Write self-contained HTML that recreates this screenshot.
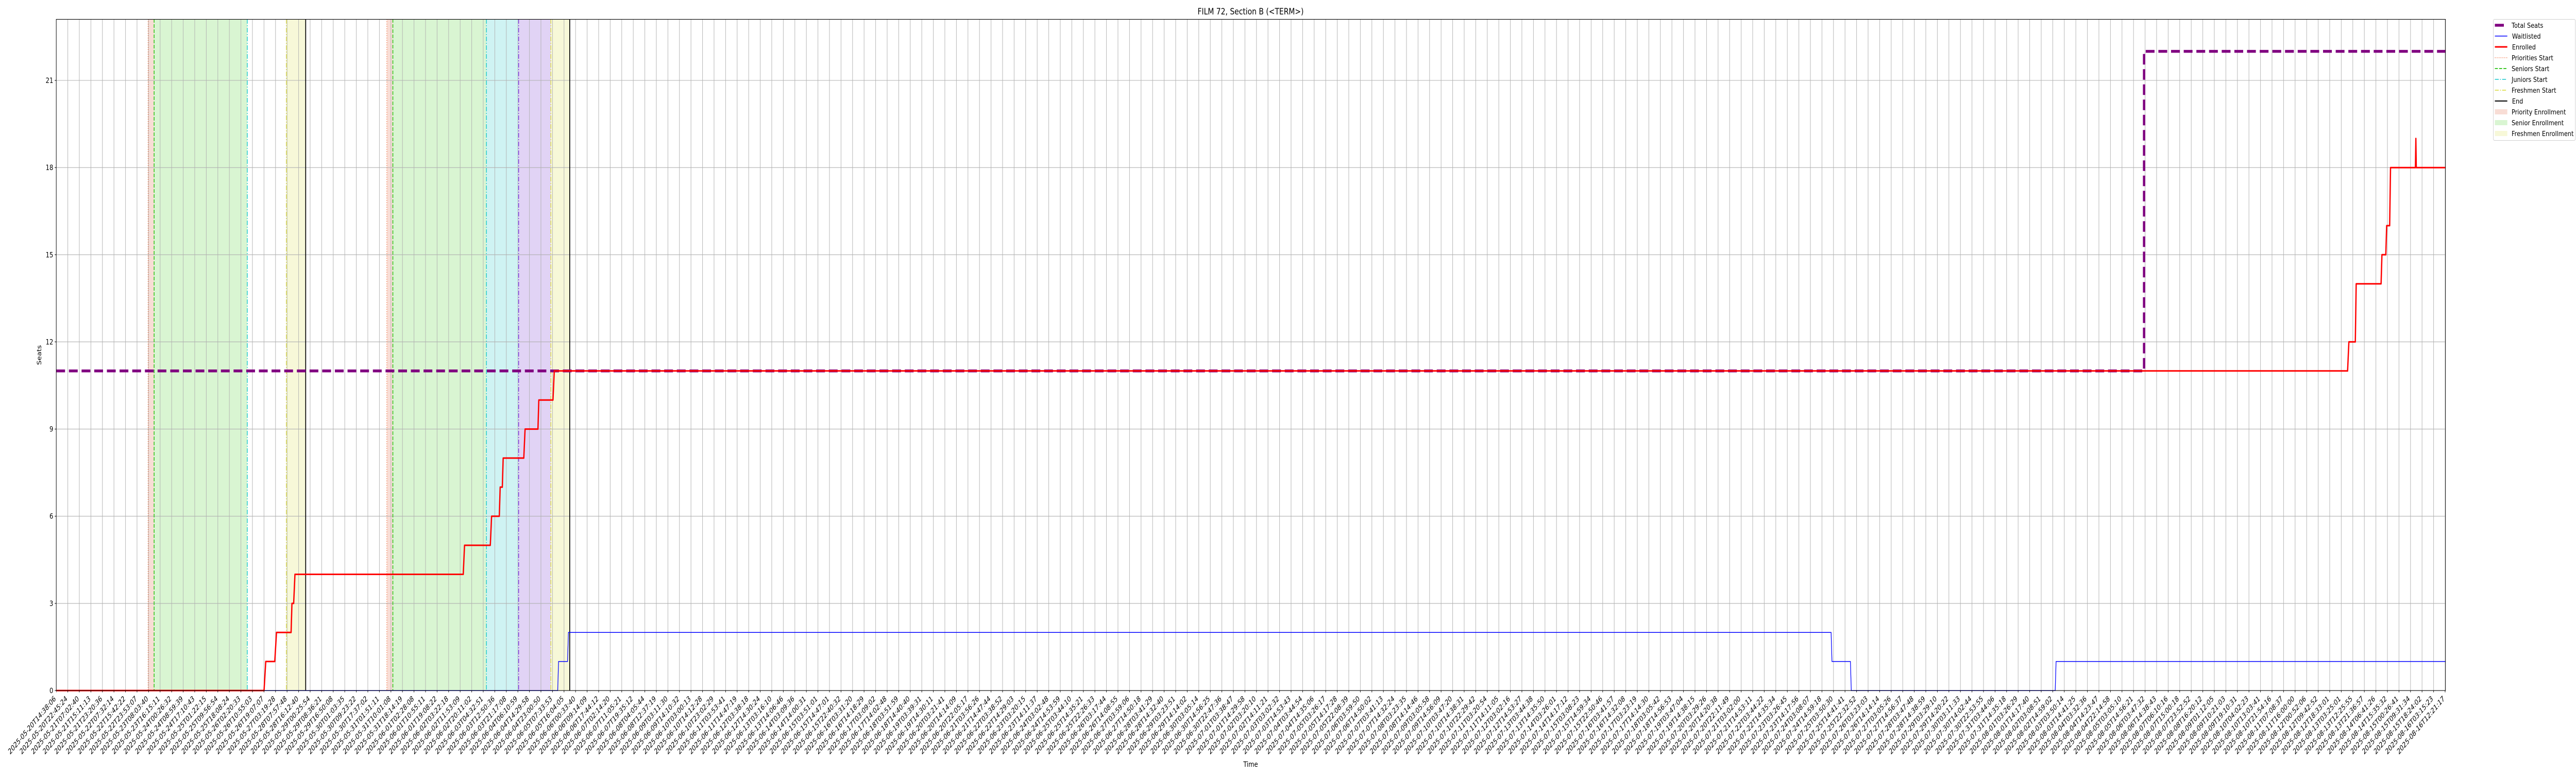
<!DOCTYPE html>
<html><head><meta charset="utf-8"><style>
html,body{margin:0;padding:0;background:#fff;width:5000px;height:1500px;overflow:hidden;}
#w{position:absolute;left:0;top:0;width:6000px;height:1500px;overflow:hidden;font-family:"DejaVu Sans","Liberation Sans",sans-serif;transform-origin:0 0;transform:scaleX(0.833333);}
svg{position:absolute;left:0;top:0;}
#l{position:absolute;left:117.56px;top:0;width:5592px;height:1500px;display:flex;}
#l i{display:block;position:relative;width:26.88px;height:10px;flex:none;}
#l b{position:absolute;right:20.4px;top:1349px;white-space:nowrap;font-weight:normal;font-size:13.9px;line-height:14px;color:#000;transform-origin:100% 0;transform:rotate(-45deg);}
</style></head><body><div id="w">
<svg width="6000" height="1500" viewBox="0 0 6000 1500" font-family="DejaVu Sans, Liberation Sans, sans-serif">
<defs>
<pattern id="vg" x="130.45" y="0" width="26.88" height="1500" patternUnits="userSpaceOnUse"><rect x="0" y="0" width="1.1" height="1500" fill="#b0b0b0"/></pattern>
<pattern id="tk" x="130.45" y="0" width="26.88" height="1500" patternUnits="userSpaceOnUse"><rect x="0" y="0" width="1.1" height="1500" fill="#000"/></pattern>
</defs>
<g>
<rect x="345" y="37" width="14" height="1303" fill="#f8ddd5"/>
<rect x="359" y="37" width="217" height="1303" fill="#d9f5d2"/>
<rect x="667" y="37" width="45" height="1303" fill="#f7f8d8"/>
<rect x="901" y="37" width="14" height="1303" fill="#f8ddd5"/>
<rect x="915" y="37" width="218" height="1303" fill="#d9f5d2"/>
<rect x="1133" y="37" width="75" height="1303" fill="#cff3f3"/>
<rect x="1208" y="37" width="75" height="1303" fill="#e1d3f5"/>
<rect x="1283" y="37" width="44" height="1303" fill="#f7f8d8"/>
</g>
<rect x="131" y="37" width="5565" height="1303" fill="url(#vg)"/>
<g stroke="#b0b0b0" stroke-width="1.1">
<line x1="131" x2="5696" y1="1170.9" y2="1170.9"/>
<line x1="131" x2="5696" y1="1001.7" y2="1001.7"/>
<line x1="131" x2="5696" y1="832.6" y2="832.6"/>
<line x1="131" x2="5696" y1="663.4" y2="663.4"/>
<line x1="131" x2="5696" y1="494.3" y2="494.3"/>
<line x1="131" x2="5696" y1="325.2" y2="325.2"/>
<line x1="131" x2="5696" y1="156" y2="156"/>
</g>
<g fill="none">
<g stroke="#f26a3a" stroke-width="1.5" stroke-dasharray="1.5,3"><line x1="345" x2="345" y1="37" y2="1340"/><line x1="901" x2="901" y1="37" y2="1340"/></g>
<g stroke="#3fc92a" stroke-width="2" stroke-dasharray="7,3"><line x1="359" x2="359" y1="37" y2="1340"/><line x1="915" x2="915" y1="37" y2="1340"/></g>
<g stroke="#12c6cc" stroke-width="1.6" stroke-dasharray="9,3,2,3"><line x1="576" x2="576" y1="37" y2="1340"/><line x1="1133" x2="1133" y1="37" y2="1340"/></g>
<g stroke="#7a35e0" stroke-width="1.6" stroke-dasharray="9,3,2,3"><line x1="1208" x2="1208" y1="37" y2="1340"/></g>
<g stroke="#d9d935" stroke-width="1.5" stroke-dasharray="9,3,2,3"><line x1="667" x2="667" y1="37" y2="1340"/><line x1="1283" x2="1283" y1="37" y2="1340"/></g>
<g stroke="#000" stroke-width="2"><line x1="712" x2="712" y1="37" y2="1340"/><line x1="1327" x2="1327" y1="37" y2="1340"/></g>
</g>
<polyline fill="none" stroke="#800080" stroke-width="5.5" stroke-dasharray="20.5,9" points="131,719.8 4994,719.8 4994,99.6 5696,99.6"/>
<polyline fill="none" stroke="#0000ff" stroke-width="1.5" points="131,1340 1299,1340 1301,1283.6 1322,1283.6 1324,1227.2 4265,1227.2 4267,1283.6 4310,1283.6 4312,1340 4787,1340 4789,1283.6 5696,1283.6"/>
<polyline fill="none" stroke="#ff0000" stroke-width="3" stroke-linejoin="round" points="131,1340 615,1340 619,1283.6 640,1283.6 644,1227.2 678,1227.2 680,1170.9 684,1170.9 687,1114.5 1079,1114.5 1082,1058.1 1142,1058.1 1145,1001.7 1163,1001.7 1165,945.3 1170,945.3 1172,888.9 1220,888.9 1223,832.6 1253,832.6 1255,776.2 1288,776.2 1291,719.8 5468,719.8 5471,663.4 5486,663.4 5488,550.7 5546,550.7 5548,494.3 5557,494.3 5559,437.9 5566,437.9 5568,325.2 5626,325.2 5627,268.8 5628,325.2 5696,325.2"/>
<rect x="131" y="37.5" width="5565" height="1302.5" fill="none" stroke="#000" stroke-width="1.1"/>
<rect x="131" y="1340" width="5566" height="3.5" fill="url(#tk)"/>
<g stroke="#000" stroke-width="1.1">
<line x1="127.5" x2="131" y1="1340" y2="1340"/><line x1="127.5" x2="131" y1="1170.9" y2="1170.9"/><line x1="127.5" x2="131" y1="1001.7" y2="1001.7"/><line x1="127.5" x2="131" y1="832.6" y2="832.6"/><line x1="127.5" x2="131" y1="663.4" y2="663.4"/><line x1="127.5" x2="131" y1="494.3" y2="494.3"/><line x1="127.5" x2="131" y1="325.2" y2="325.2"/><line x1="127.5" x2="131" y1="156" y2="156"/>
</g>
<g font-size="13.9" text-anchor="end" fill="#000">
<text x="124" y="1345">0</text><text x="124" y="1175.9">3</text><text x="124" y="1006.7">6</text><text x="124" y="837.6">9</text><text x="124" y="668.4">12</text><text x="124" y="499.3">15</text><text x="124" y="330.2">18</text><text x="124" y="161">21</text>
</g>
<text x="2913" y="28" font-size="16.7" text-anchor="middle">FILM 72, Section B (&lt;TERM&gt;)</text>
<text transform="translate(96,689) rotate(-90)" font-size="13.9" text-anchor="middle">Seats</text>
<text x="2913" y="1488" font-size="13.9" text-anchor="middle">Time</text>
<rect x="5807.5" y="37.5" width="191" height="235" rx="3" fill="#fff" stroke="#d0d0d0" stroke-width="1.1"/>
<g fill="none">
<line x1="5811" x2="5832" y1="49" y2="49" stroke="#800080" stroke-width="5.5"/>
<line x1="5811" x2="5840" y1="70" y2="70" stroke="#0000ff" stroke-width="1.5"/>
<line x1="5811" x2="5840" y1="91" y2="91" stroke="#ff0000" stroke-width="3"/>
<line x1="5811" x2="5840" y1="112" y2="112" stroke="#f26a3a" stroke-width="1.5" stroke-dasharray="1.5,3"/>
<line x1="5811" x2="5840" y1="133" y2="133" stroke="#3fc92a" stroke-width="2" stroke-dasharray="7,3"/>
<line x1="5811" x2="5840" y1="154" y2="154" stroke="#12c6cc" stroke-width="1.6" stroke-dasharray="9,3,2,3"/>
<line x1="5811" x2="5840" y1="175" y2="175" stroke="#d9d935" stroke-width="1.5" stroke-dasharray="9,3,2,3"/>
<line x1="5811" x2="5840" y1="196" y2="196" stroke="#000" stroke-width="2"/>
</g>
<rect x="5811" y="212" width="29" height="10" fill="#f8ddd5"/>
<rect x="5811" y="233" width="29" height="10" fill="#d9f5d2"/>
<rect x="5811" y="254" width="29" height="10" fill="#f7f8d8"/>
<g font-size="13.6" fill="#000">
<text x="5850" y="54">Total Seats</text>
<text x="5851" y="75">Waitlisted</text>
<text x="5851" y="96">Enrolled</text>
<text x="5850" y="117">Priorities Start</text>
<text x="5850" y="138">Seniors Start</text>
<text x="5850" y="159">Juniors Start</text>
<text x="5850" y="180">Freshmen Start</text>
<text x="5851" y="201">End</text>
<text x="5850" y="222">Priority Enrollment</text>
<text x="5850" y="243">Senior Enrollment</text>
<text x="5850" y="264">Freshmen Enrollment</text>
</g>
</svg>
<div id="l">
<i><b>2025-05-20T14:38:06</b></i><i><b>2025-05-20T22:45:24</b></i><i><b>2025-05-21T07:02:40</b></i><i><b>2025-05-21T15:11:13</b></i><i><b>2025-05-21T23:20:36</b></i><i><b>2025-05-22T07:32:14</b></i><i><b>2025-05-22T15:42:22</b></i><i><b>2025-05-22T23:53:07</b></i><i><b>2025-05-23T08:03:40</b></i><i><b>2025-05-23T16:15:11</b></i>
<i><b>2025-05-24T00:26:32</b></i><i><b>2025-05-24T08:59:39</b></i><i><b>2025-05-24T17:10:43</b></i><i><b>2025-05-25T01:22:15</b></i><i><b>2025-05-25T09:56:54</b></i><i><b>2025-05-25T18:08:24</b></i><i><b>2025-05-26T02:20:33</b></i><i><b>2025-05-26T10:55:03</b></i><i><b>2025-05-26T19:07:07</b></i><i><b>2025-05-27T03:19:28</b></i>
<i><b>2025-05-28T07:57:48</b></i><i><b>2025-05-28T16:12:40</b></i><i><b>2025-05-29T00:25:54</b></i><i><b>2025-05-29T08:36:21</b></i><i><b>2025-05-29T16:50:08</b></i><i><b>2025-05-30T01:03:35</b></i><i><b>2025-05-30T09:23:22</b></i><i><b>2025-05-30T17:37:02</b></i><i><b>2025-05-31T01:51:11</b></i><i><b>2025-05-31T10:01:08</b></i>
<i><b>2025-05-31T18:14:19</b></i><i><b>2025-06-01T02:28:08</b></i><i><b>2025-06-01T10:55:11</b></i><i><b>2025-06-01T19:08:22</b></i><i><b>2025-06-02T03:22:18</b></i><i><b>2025-06-02T11:53:09</b></i><i><b>2025-06-02T20:11:02</b></i><i><b>2025-06-03T04:32:51</b></i><i><b>2025-06-03T12:50:36</b></i><i><b>2025-06-03T21:17:08</b></i>
<i><b>2025-06-04T06:10:59</b></i><i><b>2025-06-04T14:29:58</b></i><i><b>2025-06-04T23:00:50</b></i><i><b>2025-06-05T07:33:53</b></i><i><b>2025-06-05T16:04:05</b></i><i><b>2025-06-06T00:33:40</b></i><i><b>2025-06-06T09:14:09</b></i><i><b>2025-06-06T17:44:12</b></i><i><b>2025-06-07T02:14:20</b></i><i><b>2025-06-07T11:05:21</b></i>
<i><b>2025-06-07T19:35:12</b></i><i><b>2025-06-08T04:05:44</b></i><i><b>2025-06-08T12:37:19</b></i><i><b>2025-06-09T03:11:30</b></i><i><b>2025-06-09T14:10:32</b></i><i><b>2025-06-10T03:00:13</b></i><i><b>2025-06-10T14:12:28</b></i><i><b>2025-06-10T23:02:29</b></i><i><b>2025-06-11T03:53:41</b></i><i><b>2025-06-11T14:47:19</b></i>
<i><b>2025-06-12T03:38:18</b></i><i><b>2025-06-12T14:30:24</b></i><i><b>2025-06-13T03:16:10</b></i><i><b>2025-06-13T14:06:46</b></i><i><b>2025-06-14T03:09:36</b></i><i><b>2025-06-14T14:00:31</b></i><i><b>2025-06-15T03:51:01</b></i><i><b>2025-06-15T14:47:01</b></i><i><b>2025-06-15T22:40:32</b></i><i><b>2025-06-16T03:31:20</b></i>
<i><b>2025-06-16T14:18:29</b></i><i><b>2025-06-17T03:09:02</b></i><i><b>2025-06-17T14:02:48</b></i><i><b>2025-06-18T03:51:59</b></i><i><b>2025-06-18T14:40:40</b></i><i><b>2025-06-19T03:39:31</b></i><i><b>2025-06-19T14:30:11</b></i><i><b>2025-06-20T03:21:41</b></i><i><b>2025-06-20T14:14:09</b></i><i><b>2025-06-20T22:05:17</b></i>
<i><b>2025-06-21T03:56:26</b></i><i><b>2025-06-21T14:47:44</b></i><i><b>2025-06-22T03:38:52</b></i><i><b>2025-06-22T14:29:03</b></i><i><b>2025-06-23T03:20:15</b></i><i><b>2025-06-23T14:11:37</b></i><i><b>2025-06-24T03:02:48</b></i><i><b>2025-06-24T14:53:59</b></i><i><b>2025-06-25T03:44:10</b></i><i><b>2025-06-25T14:35:21</b></i>
<i><b>2025-06-25T22:26:33</b></i><i><b>2025-06-26T03:17:44</b></i><i><b>2025-06-26T14:08:55</b></i><i><b>2025-06-27T03:59:06</b></i><i><b>2025-06-27T14:50:18</b></i><i><b>2025-06-28T03:41:29</b></i><i><b>2025-06-28T14:32:40</b></i><i><b>2025-06-29T03:23:51</b></i><i><b>2025-06-29T14:14:02</b></i><i><b>2025-06-30T03:05:14</b></i>
<i><b>2025-06-30T14:56:25</b></i><i><b>2025-06-30T22:47:36</b></i><i><b>2025-07-01T03:38:47</b></i><i><b>2025-07-01T14:29:58</b></i><i><b>2025-07-02T03:20:10</b></i><i><b>2025-07-02T14:11:21</b></i><i><b>2025-07-03T03:02:32</b></i><i><b>2025-07-03T14:53:43</b></i><i><b>2025-07-04T03:44:54</b></i><i><b>2025-07-04T14:35:06</b></i>
<i><b>2025-07-05T03:26:17</b></i><i><b>2025-07-05T14:17:28</b></i><i><b>2025-07-05T22:08:39</b></i><i><b>2025-07-06T03:59:50</b></i><i><b>2025-07-06T14:50:02</b></i><i><b>2025-07-07T03:41:13</b></i><i><b>2025-07-07T14:32:24</b></i><i><b>2025-07-08T03:23:35</b></i><i><b>2025-07-08T14:14:46</b></i><i><b>2025-07-09T03:05:58</b></i>
<i><b>2025-07-09T14:56:09</b></i><i><b>2025-07-10T03:47:20</b></i><i><b>2025-07-10T14:38:31</b></i><i><b>2025-07-10T22:29:42</b></i><i><b>2025-07-11T03:20:54</b></i><i><b>2025-07-11T14:11:05</b></i><i><b>2025-07-12T03:02:16</b></i><i><b>2025-07-12T14:53:27</b></i><i><b>2025-07-13T03:44:38</b></i><i><b>2025-07-13T14:35:50</b></i>
<i><b>2025-07-14T03:26:01</b></i><i><b>2025-07-14T14:17:12</b></i><i><b>2025-07-15T03:08:23</b></i><i><b>2025-07-15T14:59:34</b></i><i><b>2025-07-15T22:50:46</b></i><i><b>2025-07-16T03:41:57</b></i><i><b>2025-07-16T14:32:08</b></i><i><b>2025-07-17T03:23:19</b></i><i><b>2025-07-17T14:14:30</b></i><i><b>2025-07-18T03:05:42</b></i>
<i><b>2025-07-18T14:56:53</b></i><i><b>2025-07-19T03:47:04</b></i><i><b>2025-07-19T14:38:15</b></i><i><b>2025-07-20T03:29:26</b></i><i><b>2025-07-20T14:20:38</b></i><i><b>2025-07-20T22:11:49</b></i><i><b>2025-07-21T03:02:00</b></i><i><b>2025-07-21T14:53:11</b></i><i><b>2025-07-22T03:44:22</b></i><i><b>2025-07-22T14:35:34</b></i>
<i><b>2025-07-23T03:26:45</b></i><i><b>2025-07-23T14:17:56</b></i><i><b>2025-07-24T03:08:07</b></i><i><b>2025-07-24T14:59:18</b></i><i><b>2025-07-25T03:50:30</b></i><i><b>2025-07-25T14:41:41</b></i><i><b>2025-07-25T22:32:52</b></i><i><b>2025-07-26T03:23:03</b></i><i><b>2025-07-26T14:14:14</b></i><i><b>2025-07-27T03:05:26</b></i>
<i><b>2025-07-27T14:56:37</b></i><i><b>2025-07-28T03:47:48</b></i><i><b>2025-07-28T14:38:59</b></i><i><b>2025-07-29T03:29:10</b></i><i><b>2025-07-29T14:20:22</b></i><i><b>2025-07-30T03:11:33</b></i><i><b>2025-07-30T14:02:44</b></i><i><b>2025-07-30T22:53:55</b></i><i><b>2025-07-31T03:44:06</b></i><i><b>2025-07-31T14:35:18</b></i>
<i><b>2025-08-01T03:26:29</b></i><i><b>2025-08-01T14:17:40</b></i><i><b>2025-08-02T03:08:51</b></i><i><b>2025-08-02T14:59:02</b></i><i><b>2025-08-03T03:50:14</b></i><i><b>2025-08-03T14:41:25</b></i><i><b>2025-08-04T03:32:36</b></i><i><b>2025-08-04T14:23:47</b></i><i><b>2025-08-04T22:14:58</b></i><i><b>2025-08-05T03:05:10</b></i>
<i><b>2025-08-05T14:56:21</b></i><i><b>2025-08-06T03:47:32</b></i><i><b>2025-08-06T14:38:43</b></i><i><b>2025-08-07T06:10:16</b></i><i><b>2025-08-07T15:00:18</b></i><i><b>2025-08-07T23:52:52</b></i><i><b>2025-08-08T16:20:12</b></i><i><b>2025-08-09T01:12:05</b></i><i><b>2025-08-09T10:21:03</b></i><i><b>2025-08-09T19:10:31</b></i>
<i><b>2025-08-10T04:02:23</b></i><i><b>2025-08-10T13:03:41</b></i><i><b>2025-08-10T21:54:16</b></i><i><b>2025-08-11T07:08:37</b></i><i><b>2025-08-11T16:00:00</b></i><i><b>2025-08-12T00:52:06</b></i><i><b>2025-08-12T09:42:52</b></i><i><b>2025-08-12T18:33:01</b></i><i><b>2025-08-13T03:25:01</b></i><i><b>2025-08-13T12:25:55</b></i>
<i><b>2025-08-13T21:36:57</b></i><i><b>2025-08-14T06:41:26</b></i><i><b>2025-08-14T15:35:32</b></i><i><b>2025-08-15T00:26:41</b></i><i><b>2025-08-15T09:31:34</b></i><i><b>2025-08-15T18:24:02</b></i><i><b>2025-08-16T03:15:23</b></i><i><b>2025-08-16T12:21:17</b></i>
</div>
</div></body></html>
